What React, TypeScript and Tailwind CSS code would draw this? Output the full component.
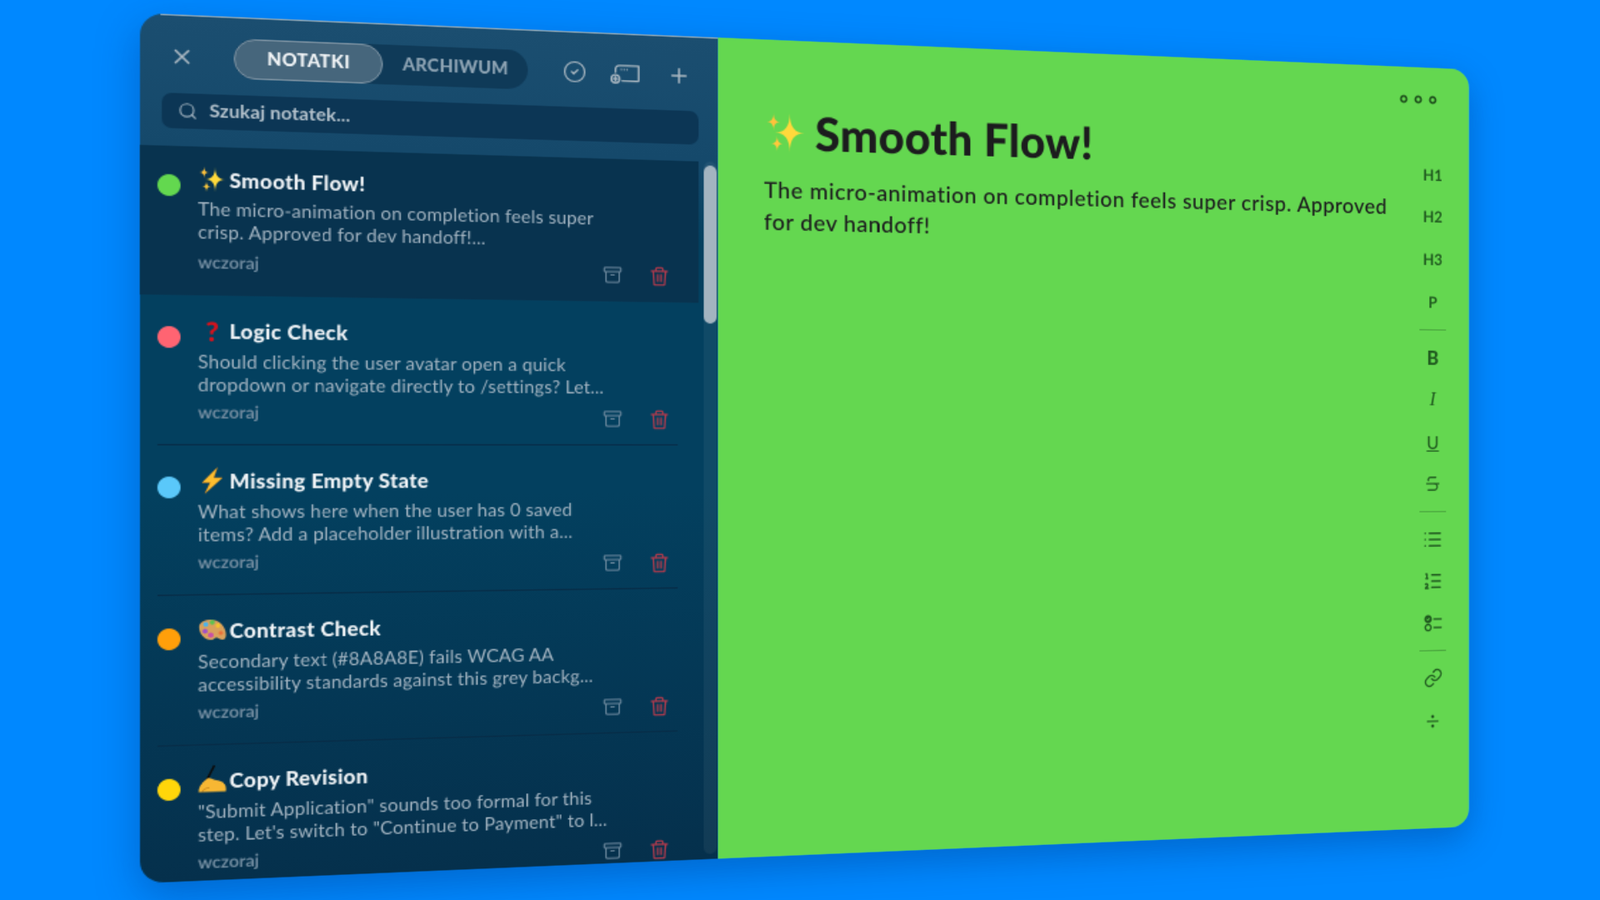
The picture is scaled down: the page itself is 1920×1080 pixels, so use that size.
import React from "react";
import { X, Plus, Search, Archive, CircleCheck, List, ListOrdered, Link, Divide, Strikethrough } from "lucide-react";

function Star({ cx, cy, r, fill }: { cx: number; cy: number; r: number; fill: string }) {
  return <path d={`M${cx} ${cy - r}Q${cx} ${cy} ${cx + r * 0.75} ${cy}Q${cx} ${cy} ${cx} ${cy + r}Q${cx} ${cy} ${cx - r * 0.75} ${cy}Q${cx} ${cy} ${cx} ${cy - r}Z`} fill={fill} />;
}
function Sparkles({ size = 20 }: { size?: number }) {
  return (
    <svg width={size} height={size} viewBox="0 0 30 30">
      <Star cx={18} cy={15} r={14} fill="#FFD93B" />
      <Star cx={6.5} cy={7.5} r={6.5} fill="#FFC23B" />
      <Star cx={9} cy={23} r={6} fill="#FFC93B" />
    </svg>
  );
}
function Bolt() {
  return (
    <svg width="20" height="20" viewBox="0 0 20 20">
      <path d="M13.5 0.5L3 11.5H8.6L5 19.5L17 8H11L13.5 0.5Z" fill="#FDBE2E" stroke="#D98A1E" strokeWidth="0.5" />
    </svg>
  );
}
function Palette() {
  return (
    <svg width="20" height="20" viewBox="0 0 20 20">
      <path d="M1 6C3 1.5 11 0.5 15.5 4.5C19 7.5 20.5 13 19 16C17.5 18 15.5 16.5 13.5 15.5C11.5 15 11.5 17 9.5 17C5 17.5 0 12 1 6Z" fill="#D9A15C" />
      <circle cx="5.5" cy="5.5" r="1.8" fill="#4FB3E8" />
      <circle cx="10" cy="4" r="1.7" fill="#5CC24F" />
      <circle cx="14" cy="6.5" r="1.6" fill="#F2C12E" />
      <circle cx="5" cy="10.5" r="1.8" fill="#A04FC9" />
      <circle cx="9" cy="13.5" r="1.9" fill="#C94FA8" />
      <circle cx="16" cy="12" r="1.5" fill="#E8703A" />
    </svg>
  );
}
function WritingHand() {
  return (
    <svg width="20" height="20" viewBox="0 0 20 20" className="overflow-visible">
      <path d="M11.5 -1L6 10" stroke="#0b0b0b" strokeWidth="1.5" />
      <path d="M0.5 18.5C0.5 14 3 11.5 6 9C7.5 7.5 9 8.5 10 9C12 10 14 10 16 11C19 12 20 15 19.5 18.5Z" fill="#F7B733" />
      <path d="M3 18.5C4 16 6 15.5 8 15.5" stroke="#C98A1E" strokeWidth="0.8" fill="none" />
    </svg>
  );
}
function Question() {
  return <span className="block w-[20px] text-center text-[20px] leading-[20px] font-black text-[#d4121c]">?</span>;
}

function Trash({ className }: { className?: string }) {
  return (
    <svg viewBox="0 0 24 24" width="16" height="16" fill="none" stroke="currentColor" strokeWidth="1.8" strokeLinecap="round" strokeLinejoin="round" className={className}>
      <path d="M3 6h18" />
      <path d="M19 6l-1 15a1 1 0 0 1-1 1H7a1 1 0 0 1-1-1L5 6" />
      <path d="M8 6V4a2 2 0 0 1 2-2h4a2 2 0 0 1 2 2v2" />
      <path d="M9.5 10v8M12 10v8M14.5 10v8" strokeWidth="1.3" />
    </svg>
  );
}
function NewWindow() {
  return (
    <svg viewBox="0 0 30 20" width="22" height="15" fill="none" stroke="currentColor" strokeWidth="1.9" strokeLinecap="round" strokeLinejoin="round" className="overflow-visible">
      <path d="M5 8V5a4 4 0 0 1 4-4h20v15a1 1 0 0 1-1 1H12" />
      <path d="M11 5h.01M14 5h.01M17 5h.01" />
      <circle cx="5" cy="15" r="4.2" />
      <path d="M5 13v4M3 15h4" />
    </svg>
  );
}
function Tasks() {
  return (
    <svg viewBox="0 0 24 24" width="17" height="17" fill="none" stroke="currentColor" strokeWidth="2" strokeLinecap="round">
      <circle cx="5.5" cy="7" r="3.8" fill="currentColor" />
      <path d="M3.8 7l1.3 1.3 2-2.3" stroke="#64d750" strokeWidth="1" />
      <circle cx="5.5" cy="17" r="3.6" />
      <path d="M13 7h9M13 17h9" />
    </svg>
  );
}

const notes: { icon: React.ReactNode; color: string; dot: string; title: string; l1: string; l2: string }[] = [
  { icon: <Sparkles />, color: "bg-[#63d84f]", dot: "mt-[7.5px]", title: "Smooth Flow!", l1: "The micro-animation on completion feels super", l2: "crisp. Approved for dev handoff!..." },
  { icon: <Question />, color: "bg-[#ff6472]", dot: "mt-[7px]", title: "Logic Check", l1: "Should clicking the user avatar open a quick", l2: "dropdown or navigate directly to /settings? Let..." },
  { icon: <Bolt />, color: "bg-[#5ac8fa]", dot: "mt-[7.7px]", title: "Missing Empty State", l1: "What shows here when the user has 0 saved", l2: "items? Add a placeholder illustration with a..." },
  { icon: <Palette />, color: "bg-[#ff9f0a]", dot: "mt-[8px]", title: "Contrast Check", l1: "Secondary text (#8A8A8E) fails WCAG AA", l2: "accessibility standards against this grey backg..." },
  { icon: <WritingHand />, color: "bg-[#ffd60a]", dot: "mt-[8.5px]", title: "Copy Revision", l1: "\"Submit Application\" sounds too formal for this", l2: "step. Let's switch to \"Continue to Payment\" to l..." },
];

function Row({ note, active, last }: { note: (typeof notes)[number]; active: boolean; last: boolean }) {
  return (
    <div className={`relative flex shrink-0 gap-[12px] pl-[12px] ${active ? "h-[110px] bg-[#08334f] pt-[14px]" : "h-[111px] pt-[16px]"}`}>
      <span className={`h-[16px] w-[16px] shrink-0 rounded-full ${note.dot} ${note.color}`} />
      <div className="w-[344px] min-w-0">
        <div className="flex h-[20px] items-center gap-[2px]">
          <span className="h-[20px] w-[20px] shrink-0">{note.icon}</span>
          <span className="text-[15px] leading-[20px] font-black tracking-[0.3px] text-[#eef2f5]">{note.title}</span>
        </div>
        <div className={`text-[13.5px] leading-[17px] tracking-[0.17px] whitespace-nowrap text-[#a4b5c2] ${active ? "mt-[4px]" : "mt-[5px]"}`}>
          <div>{note.l1}</div>
          <div>{note.l2}</div>
        </div>
        <div className={`flex items-start ${active ? "mt-[6px]" : "mt-[4px]"}`}>
          <span className="text-[12.5px] leading-[16px] font-bold text-[#6f8a9e]">wczoraj</span>
          <div className="mt-[4px] ml-auto flex items-center gap-[20px]">
            <Archive size={15} strokeWidth={1.7} className="text-[#6d899e]" />
            <Trash className="text-[#b23a4c]" />
          </div>
        </div>
      </div>
      {!active && !last && <span className="absolute right-[16px] bottom-0 left-[12px] h-px bg-[#062c47]" />}
    </div>
  );
}

function Tool({ children, className = "" }: { children: React.ReactNode; className?: string }) {
  return <div className={`flex h-[32px] w-[32px] items-center justify-center text-[#215c20] ${className}`}>{children}</div>;
}
function Sep() {
  return <div className="mx-auto my-[3px] h-px w-[24px] bg-[#4aa63e]" />;
}

export default function App() {
  return (
    <div className="h-[1080px] w-[1920px] overflow-hidden bg-[#0088ff] font-['Lato',sans-serif]">
      <div className="flex h-[640px] w-[1050px] origin-top-left overflow-hidden rounded-[16px] shadow-[0_10px_30px_rgba(0,40,110,0.35)] [transform:matrix3d(1.77029,0.076552,0,0.00014248,0,1.63203,0,0,0,0,1,0,168,15.5,0,1)]">
        <aside className="relative flex h-full w-[420.6px] shrink-0 flex-col bg-[linear-gradient(180deg,#1b4e70_0%,#15496b_15%,#03405f_25%,#03405f_55%,#05304c_100%)]">
          <span className="absolute top-0 right-0 left-[14px] h-[0.4px] bg-white/50" />
          <div className="mt-[16px] flex h-[30px] items-center">
            <X size={18} strokeWidth={2} className="ml-[20px] text-[#a8b6c0]" />
            <div className="ml-[27px] flex h-[30px] w-[212px] rounded-full bg-[#0f3a58]">
              <div className="flex w-[106px] items-center justify-center rounded-full border border-[#7d93a3] bg-[#46667c] text-[13px] font-black tracking-[0.4px] text-[#f2f5f7]">NOTATKI</div>
              <div className="flex flex-1 items-center justify-center text-[13px] font-black tracking-[0.2px] text-[#8da3b3]">ARCHIWUM</div>
            </div>
            <div className="ml-[26px] flex items-center text-[#a8b6c0]">
              <CircleCheck size={18} strokeWidth={1.6} />
              <span className="ml-[18px]"><NewWindow /></span>
              <span className="ml-[21px]"><Plus size={18} strokeWidth={2} /></span>
            </div>
          </div>
          <div className="mx-[14.5px] mt-[11.5px] flex h-[26px] items-center rounded-[7px] bg-[#0c3655] pl-[11px]">
            <Search size={14} strokeWidth={2} className="text-[#94a7b5]" />
            <span className="ml-[8.5px] text-[13.5px] font-bold tracking-[0.1px] text-[#b4c2cc]">Szukaj notatek...</span>
          </div>
          <div className="mt-[13px] flex min-h-0 flex-1">
            <div className="flex w-[406px] shrink-0 flex-col overflow-hidden">
              {notes.map((n, i) => (
                <Row key={n.title} note={n} active={i === 0} last={i === 4} />
              ))}
            </div>
            <div className="ml-[4px] h-[539px] w-[10px] rounded-full bg-white/5">
              <div className="mt-[3px] h-[123px] w-[10px] rounded-full bg-[#a3b4c0]" />
            </div>
          </div>
        </aside>
        <main className="relative flex min-w-0 flex-1 border-r border-[#4cc68a] bg-[#64d750]">
          <div className="min-w-0 flex-1 pt-[52px] pl-[36px]">
            <div className="flex h-[40px] items-center gap-[7px]">
              <Sparkles size={33} />
              <h1 className="text-[36px] leading-[40px] font-black tracking-[0.25px] whitespace-nowrap text-[#1c1c1e]">Smooth Flow!</h1>
            </div>
            <p className="mt-[14px] text-[17.5px] leading-[24.5px] font-medium tracking-[0.55px] whitespace-nowrap text-[#1c1c1e]">
              The micro-animation on completion feels super crisp. Approved
              <br />
              for dev handoff!
            </p>
          </div>
          <svg width="36" height="12" viewBox="0 0 36 12" fill="none" stroke="#1e4f1c" strokeWidth="1.8" className="absolute top-[21px] right-[27px]">
            <circle cx="5" cy="6" r="2.5" />
            <circle cx="18" cy="6" r="2.5" />
            <circle cx="31" cy="6" r="2.5" />
          </svg>
          <div className="mr-[16px] flex w-[32px] flex-col gap-[3.6px] pt-[74.6px]">
            <Tool className="text-[13px] font-bold">H1</Tool>
            <Tool className="text-[13px] font-bold">H2</Tool>
            <Tool className="text-[13px] font-bold">H3</Tool>
            <Tool className="text-[13px] font-bold">P</Tool>
            <Sep />
            <Tool className="text-[16px] font-black">B</Tool>
            <Tool className="font-['Liberation_Serif',serif] text-[17px] italic">I</Tool>
            <Tool className="text-[15px] font-medium underline">U</Tool>
            <Tool><Strikethrough size={16} strokeWidth={2} /></Tool>
            <Sep />
            <Tool><List size={18} strokeWidth={2} /></Tool>
            <Tool><ListOrdered size={18} strokeWidth={2} /></Tool>
            <Tool><Tasks /></Tool>
            <Sep />
            <Tool><Link size={17} strokeWidth={1.9} /></Tool>
            <Tool><Divide size={16} strokeWidth={2} /></Tool>
          </div>
        </main>
      </div>
    </div>
  );
}
